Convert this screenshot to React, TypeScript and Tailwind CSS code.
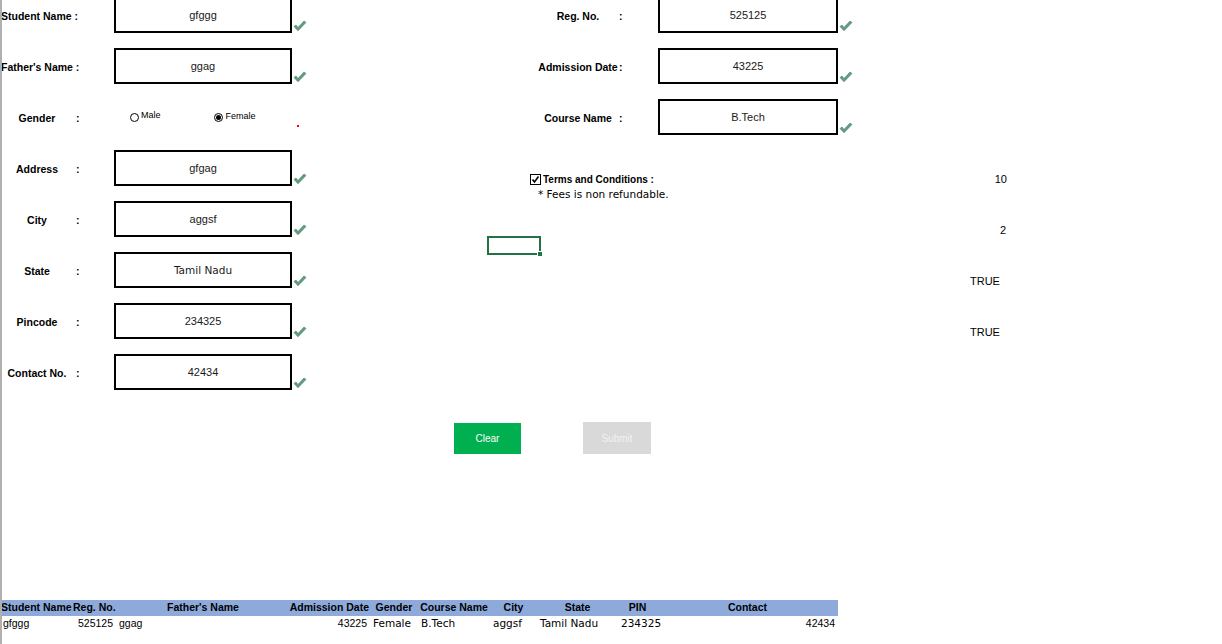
import React from 'react';

const sans = { fontFamily: '"Liberation Sans", Arial, sans-serif' };
const dvs = { fontFamily: '"DejaVu Sans", sans-serif', fontSize: '10.5px' };

const Check: React.FC = () => (
  <svg width="14" height="12" viewBox="0 0 14 12" className="shrink-0">
    <path d="M1 6.5 L5 10.8 L13 2.5 L11 1 L5 7.5 L3 5 Z" fill="#5f9e80" stroke="#4a7d64" strokeWidth="0.6" strokeLinejoin="round" />
  </svg>
);

const Box: React.FC<{ value: string; w: string; dv?: boolean }> = ({ value, w, dv }) => (
  <div className="flex items-end h-[36px]">
    <div className={`${w} h-[36px] border-2 border-black flex items-center justify-center text-[11px] text-[#1a1a1a] pt-[1px]`}
      style={dv ? dvs : undefined}>
      {value}
    </div>
    <div className="mb-[1px] ml-[1px]"><Check /></div>
  </div>
);

const leftRows = [
  { label: 'Student Name :', value: 'gfggg', flush: true },
  { label: "Father's Name :", value: 'ggag', flush: true },
  { label: 'Gender', value: '' },
  { label: 'Address', value: 'gfgag' },
  { label: 'City', value: 'aggsf' },
  { label: 'State', value: 'Tamil Nadu', dv: true },
  { label: 'Pincode', value: '234325' },
  { label: 'Contact No.', value: '42434' },
];

const cols = [
  { h: 'Student Name', w: 72, ha: 'left', d: 'gfggg', da: 'left' },
  { h: 'Reg. No.', w: 44, ha: 'left', d: '525125', da: 'right' },
  { h: "Father's Name", w: 174, ha: 'center', d: 'ggag', da: 'left' },
  { h: 'Admission Date', w: 80, ha: 'right', d: '43225', da: 'right' },
  { h: 'Gender', w: 48, ha: 'center', d: 'Female', da: 'left', dv: true },
  { h: 'Course Name', w: 72, ha: 'center', d: 'B.Tech', da: 'left', dv: true },
  { h: 'City', w: 47, ha: 'center', d: 'aggsf', da: 'left', dv: true },
  { h: 'State', w: 81, ha: 'center', d: 'Tamil Nadu', da: 'left', dv: true },
  { h: 'PIN', w: 39, ha: 'center', d: '234325', da: 'left', dv: true },
  { h: 'Contact', w: 181, ha: 'center', d: '42434', da: 'right' },
];

const alignCls: Record<string, string> = { left: 'justify-start', right: 'justify-end', center: 'justify-center' };

export default function App() {
  return (
    <div className="relative w-[1222px] h-[644px] overflow-hidden bg-white border-l-2 border-[#b0b0b0] text-black" style={sans}>
      <div className="absolute left-[-2px] top-[237px] w-[2px] h-[16px] bg-[#217346]" />

      <div className="flex -mt-[3px] -ml-[2px]">
        {/* left form */}
        <div className="flex flex-col w-[320px]">
          {leftRows.map((r, i) => (
            <div key={i} className="h-[51px] flex items-start">
              <div className="w-[114px] h-[36px] flex items-center pt-[3px] text-[10.5px] font-bold">
                {r.flush ? (
                  <span className="pl-[1px]">{r.label}</span>
                ) : (
                  <>
                    <span className="w-[74px] text-center">{r.label}</span>
                    <span className="ml-[2px]">:</span>
                  </>
                )}
              </div>
              {r.label === 'Gender' ? (
                <div className="relative w-[190px] h-[36px] flex items-center text-[9px]" style={sans}>
                  <span className="ml-[16px] w-[9px] h-[9px] rounded-full border border-black" />
                  <span className="ml-[2px] -mt-[2px]">Male</span>
                  <span className="ml-[53px] w-[9px] h-[9px] rounded-full border border-black flex items-center justify-center">
                    <span className="w-[5px] h-[5px] rounded-full bg-black" />
                  </span>
                  <span className="ml-[3px]">Female</span>
                  <span className="absolute left[183px] left-[183px] top-[26px] w-[2px] h-[2px] bg-[#ff0000]" />
                </div>
              ) : (
                <Box value={r.value} w="w-[178px]" dv={r.dv} />
              )}
            </div>
          ))}
        </div>

        {/* right form */}
        <div className="flex flex-col ml-[167px] w-[400px]">
          {[
            { label: 'Reg. No.', value: '525125' },
            { label: 'Admission Date', value: '43225' },
            { label: 'Course Name', value: 'B.Tech' },
          ].map((r, i) => (
            <div key={i} className="h-[51px] flex items-start">
              <div className="w-[171px] h-[36px] flex items-center pt-[3px] text-[10.5px] font-bold">
                <span className="ml-[50px] w-[82px] text-center whitespace-nowrap">{r.label}</span>
                <span>:</span>
              </div>
              <Box value={r.value} w="w-[180px]" />
            </div>
          ))}
          <div className="h-[51px] pt-[22px] pl-[43px]">
            <div className="flex items-center gap-[2px]">
              <span className="w-[11px] h-[11px] border border-black flex items-center justify-center">
                <svg width="9" height="9" viewBox="0 0 9 9"><path d="M1.5 4.5 L3.5 7 L7.5 1.5" fill="none" stroke="black" strokeWidth="1.6" /></svg>
              </span>
              <span className="text-[10px] font-bold">Terms and Conditions :</span>
            </div>
            <div className="pl-[8px] text-[10.5px] leading-[14px]" style={dvs}>* Fees is non refundable.</div>
          </div>
          <div className="h-[51px] pt-[35px]">
            <div className="relative w-[54px] h-[19px] border-2 border-[#217346]">
              <span className="absolute right-[-4px] bottom-[-4px] w-[6px] h-[6px] bg-[#217346] border border-white" />
            </div>
          </div>
        </div>

        {/* side values */}
        <div className="flex flex-col ml-[74px] w-[48px] text-[11px] pt-[156px]">
          <div className="h-[51px] pt-[18px] text-right pr-[2px]">10</div>
          <div className="h-[51px] pt-[18px] text-right pr-[3px]">2</div>
          <div className="h-[51px] pt-[18px] text-center">TRUE</div>
          <div className="h-[51px] pt-[18px] text-center">TRUE</div>
        </div>
      </div>

      {/* buttons */}
      <div className="flex mt-[17px] -ml-[2px]">
        <div className="ml-[454px] mt-[1px] w-[67px] h-[31px] bg-[#00b050] text-white text-[10px] flex items-center justify-center">Clear</div>
        <div className="ml-[62px] w-[68px] h-[32px] bg-[#d9d9d9] text-[#f2f2f2] text-[10px] flex items-center justify-center">Submit</div>
      </div>

      {/* data table */}
      <div className="mt-[146px] -ml-[2px] w-[838px] text-[10.5px]">
        <div className="flex h-[16px] bg-[#8eaadb] font-bold">
          {cols.map((c, i) => (
            <div key={i} style={{ width: c.w }} className={`flex items-center px-[1px] whitespace-nowrap ${alignCls[c.ha]}`}>{c.h}</div>
          ))}
        </div>
        <div className="flex h-[16px]">
          {cols.map((c, i) => (
            <div key={i} style={{ width: c.w, ...(c.dv ? dvs : {}) }}
              className={`flex items-center px-[3px] whitespace-nowrap ${alignCls[c.da]}`}>{c.d}</div>
          ))}
        </div>
      </div>
    </div>
  );
}
